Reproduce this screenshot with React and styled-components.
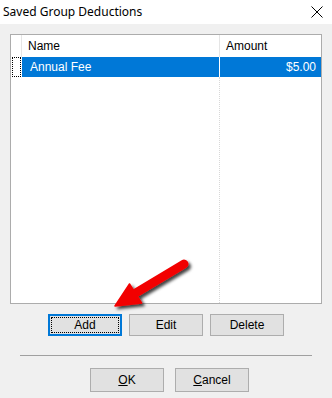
import React from 'react';
import styled, { createGlobalStyle, css } from 'styled-components';

const GlobalStyle = createGlobalStyle`
  html, body {
    margin: 0;
    padding: 0;
    background: #f0f0f0;
  }
  body {
    font-family: "Liberation Sans", Arial, sans-serif;
    font-size: 11px;
    color: #000;
  }
`;

const Dialog = styled.div`
  position: relative;
  width: 332px;
  height: 398px;
  background: #f0f0f0;
  display: flex;
  flex-direction: column;
  overflow: hidden;
`;

const TitleBar = styled.div`
  height: 24px;
  background: #fff;
  display: flex;
  align-items: center;
  justify-content: space-between;
  padding: 0 9px 0 3px;
  font-family: "Noto Sans", "Open Sans", sans-serif;
  font-size: 12px;
`;

const TitleText = styled.span`
  margin-top: -2px;
`;

const Body = styled.div`
  display: flex;
  flex-direction: column;
  padding: 10px 10px 0 10px;
`;

const ListBox = styled.div`
  width: 312px;
  height: 270px;
  box-sizing: border-box;
  border: 1px solid #acacac;
  background: #fff;
  display: flex;
  flex-direction: column;
`;

const Row = styled.div`
  display: grid;
  grid-template-columns: 11px 198px 1fr;
  height: ${p => p.$h}px;
  ${p => p.$fill && css`flex: 1;`}
`;

const HeadCell = styled.div`
  display: flex;
  align-items: center;
  padding-left: ${p => p.$pad || 0}px;
  border-right: ${p => (p.$line ? '1px solid #e5e5e5' : 'none')};
  font-size: 12px;
`;

const Cell = styled.div`
  display: flex;
  align-items: center;
  justify-content: ${p => (p.$right ? 'flex-end' : 'flex-start')};
  padding: 0 5px 0 ${p => p.$pad || 0}px;
  font-size: 12px;
  background: ${p => (p.$sel ? '#0078d7' : 'transparent')};
  color: ${p => (p.$sel ? '#fff' : '#000')};
  border-right: ${p => (p.$line ? `1px ${p.$sel ? 'solid #fff' : 'dotted #d8d8d8'}` : 'none')};
`;

const FocusCell = styled.div`
  margin: 0 1px 0 1px;
  border: 1px dotted #000;
`;

const ButtonRow = styled.div`
  display: flex;
  gap: ${p => p.$gap}px;
  padding-left: ${p => p.$left}px;
  margin-top: ${p => p.$top}px;
`;

const Button = styled.button`
  width: 74px;
  height: ${p => p.$h}px;
  box-sizing: border-box;
  background: #e1e1e1;
  border: 1px solid #adadad;
  font-family: "Liberation Sans", Arial, sans-serif;
  font-size: 12px;
  color: #000;
  padding: 0;
  margin: 0;
  position: relative;
  ${p =>
    p.$focus &&
    css`
      border: 2px solid #0078d7;
      &::after {
        content: '';
        position: absolute;
        inset: 1px;
        border: 1px dotted #000;
      }
    `}
  u {
    text-decoration: underline;
    text-underline-offset: 1px;
  }
`;

const Separator = styled.div`
  margin: 19px 20px 0 20px;
  height: 1px;
  background: #a0a0a0;
`;

const ArrowLayer = styled.svg`
  position: absolute;
  left: 0;
  top: 0;
  pointer-events: none;
`;

export default function App() {
  return (
    <>
      <GlobalStyle />
      <Dialog>
        <TitleBar>
          <TitleText>Saved Group Deductions</TitleText>
          <svg width="12" height="12" viewBox="0 0 12 12">
            <path d="M0.5 0.5 L11.5 11.5 M11.5 0.5 L0.5 11.5" stroke="#000" strokeWidth="1" />
          </svg>
        </TitleBar>
        <Body>
          <ListBox>
            <Row $h={22}>
              <HeadCell $line />
              <HeadCell $line $pad={6}>Name</HeadCell>
              <HeadCell $pad={6}>Amount</HeadCell>
            </Row>
            <Row $h={20}>
              <FocusCell />
              <Cell $sel $line $pad={8}>Annual Fee</Cell>
              <Cell $sel $right>$5.00</Cell>
            </Row>
            <Row $fill>
              <div />
              <Cell $line />
              <Cell />
            </Row>
          </ListBox>
        </Body>
        <ButtonRow $gap={7} $left={48} $top={10}>
          <Button $h={22} $focus>Add</Button>
          <Button $h={22}>Edit</Button>
          <Button $h={22}>Delete</Button>
        </ButtonRow>
        <Separator />
        <ButtonRow $gap={11} $left={90} $top={12}>
          <Button $h={24}><u>O</u>K</Button>
          <Button $h={24}><u>C</u>ancel</Button>
        </ButtonRow>
        <ArrowLayer width="332" height="398" viewBox="0 0 332 398">
          <defs>
            <filter id="shadow" x="-20%" y="-20%" width="140%" height="140%">
              <feDropShadow dx="2.5" dy="2.5" stdDeviation="1.6" floodColor="#000" floodOpacity="0.75" />
            </filter>
          </defs>
          <g filter="url(#shadow)">
            <line x1="184" y1="264" x2="134" y2="294" stroke="#f20000" strokeWidth="9" strokeLinecap="round" />
            <polygon points="115,306 129.5,284 141.5,303" fill="#f20000" stroke="#f20000" strokeWidth="1.5" strokeLinejoin="round" />
          </g>
        </ArrowLayer>
      </Dialog>
    </>
  );
}
